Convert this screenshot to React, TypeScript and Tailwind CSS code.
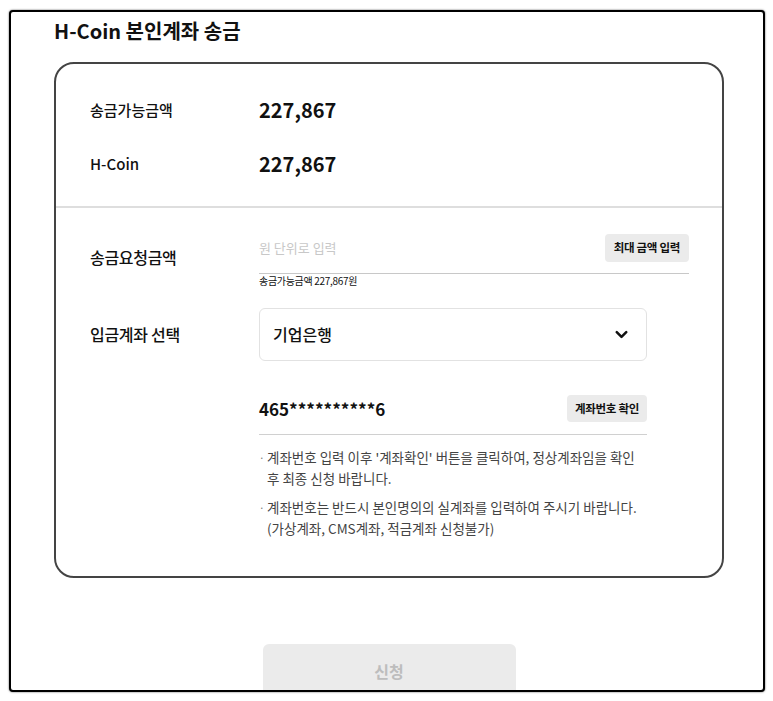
import { ChevronDown } from "lucide-react";

const kr = "font-['Noto_Sans_CJK_KR','Noto_Sans',sans-serif]";
const lato = "font-['Lato','Noto_Sans_CJK_KR',sans-serif]";

export default function App() {
  return (
    <div className={`min-h-[701px] bg-white pt-[10px] pl-[9px] ${kr}`}>
      {/* Frame */}
      <div className="h-[682px] w-[756px] overflow-hidden rounded-[4px] border-2 border-black bg-white shadow-[0_0_2px_rgba(0,0,0,0.7)]">
        <h1 className="pl-[43px] pt-[5px] text-[20px] font-bold leading-[28px] text-[#111]">
          H-Coin 본인계좌 송금
        </h1>

        {/* Card */}
        <div className="ml-[43px] mt-[17px] w-[670px] rounded-[20px] border-2 border-[#444]">
          {/* Balance */}
          <div className="flex flex-col gap-[22px] pb-[26px] pl-[34px] pt-[30px]">
            <div className="flex h-[32px] items-center">
              <span className="w-[169px] text-[15px] font-medium text-[#111]">송금가능금액</span>
              <span className="text-[20px] font-bold text-[#111]">227,867</span>
            </div>
            <div className="flex h-[32px] items-center">
              <span className="w-[169px] text-[15px] font-medium text-[#111]">H-Coin</span>
              <span className="text-[20px] font-bold text-[#111]">227,867</span>
            </div>
          </div>

          {/* Request */}
          <div className="border-t-2 border-[#dedede] pb-[37px] pl-[34px] pt-[26px]">
            <div className="flex">
              <span className="w-[169px] pt-[11px] text-[16px] font-medium leading-[24px] tracking-[-0.3px] text-[#111]">
                송금요청금액
              </span>
              <div className="w-[430px]">
                <div className="flex items-center justify-between border-b border-[#c8c8c8] pb-[11px]">
                  <span className="text-[13px] text-[#c8c8c8]">원 단위로 입력</span>
                  <button className="h-[28px] rounded-[4px] bg-[#ebebeb] px-[9px] text-[11.5px] font-bold tracking-[-0.3px] text-[#111]">
                    최대 금액 입력
                  </button>
                </div>
                <p className="text-[10px] leading-[14px] tracking-[-0.3px] text-[#111]">송금가능금액 227,867원</p>
              </div>
            </div>

            <div className="mt-[20px] flex">
              <span className="w-[169px] pt-[14px] text-[16px] font-medium leading-[24px] tracking-[-0.3px] text-[#111]">
                입금계좌 선택
              </span>
              <div className="w-[388px]">
                <div className="flex h-[53px] items-center justify-between rounded-[6px] border border-[#e2e2e2] pl-[13px] pr-[15px]">
                  <span className={`${lato} text-[16px] font-medium text-[#111]`}>기업은행</span>
                  <ChevronDown size={19} strokeWidth={3.2} className="text-[#111]" />
                </div>

                <div className="mt-[34px] flex items-center justify-between border-b border-[#d0d0d0] pb-[12px]">
                  <span className="text-[17px] font-bold text-[#111]">465**********6</span>
                  <button className="h-[27px] rounded-[4px] bg-[#ebebeb] px-[8px] text-[11.5px] font-bold tracking-[-0.3px] text-[#111]">
                    계좌번호 확인
                  </button>
                </div>

                <div className="mt-[12px] flex flex-col gap-[8px] text-[13.5px] leading-[21px] text-[#444]">
                  <div className="flex">
                    <span className="w-[8px] text-[10px] text-[#777]">·</span>
                    <p className="whitespace-nowrap">
                      계좌번호 입력 이후 '계좌확인' 버튼을 클릭하여, 정상계좌임을 확인
                      <br />
                      후 최종 신청 바랍니다.
                    </p>
                  </div>
                  <div className="flex">
                    <span className="w-[8px] text-[10px] text-[#777]">·</span>
                    <p className="whitespace-nowrap">
                      계좌번호는 반드시 본인명의의 실계좌를 입력하여 주시기 바랍니다.
                      <br />
                      (가상계좌, CMS계좌, 적금계좌 신청불가)
                    </p>
                  </div>
                </div>
              </div>
            </div>
          </div>
        </div>

        {/* Submit */}
        <div className="ml-[43px] mt-[66px] flex w-[670px] justify-center">
          <button className="h-[56px] w-[253px] rounded-[6px] bg-[#ebebeb] pb-[2px] text-[16px] font-bold text-[#bdbdbd]">
            신청
          </button>
        </div>
      </div>
    </div>
  );
}
